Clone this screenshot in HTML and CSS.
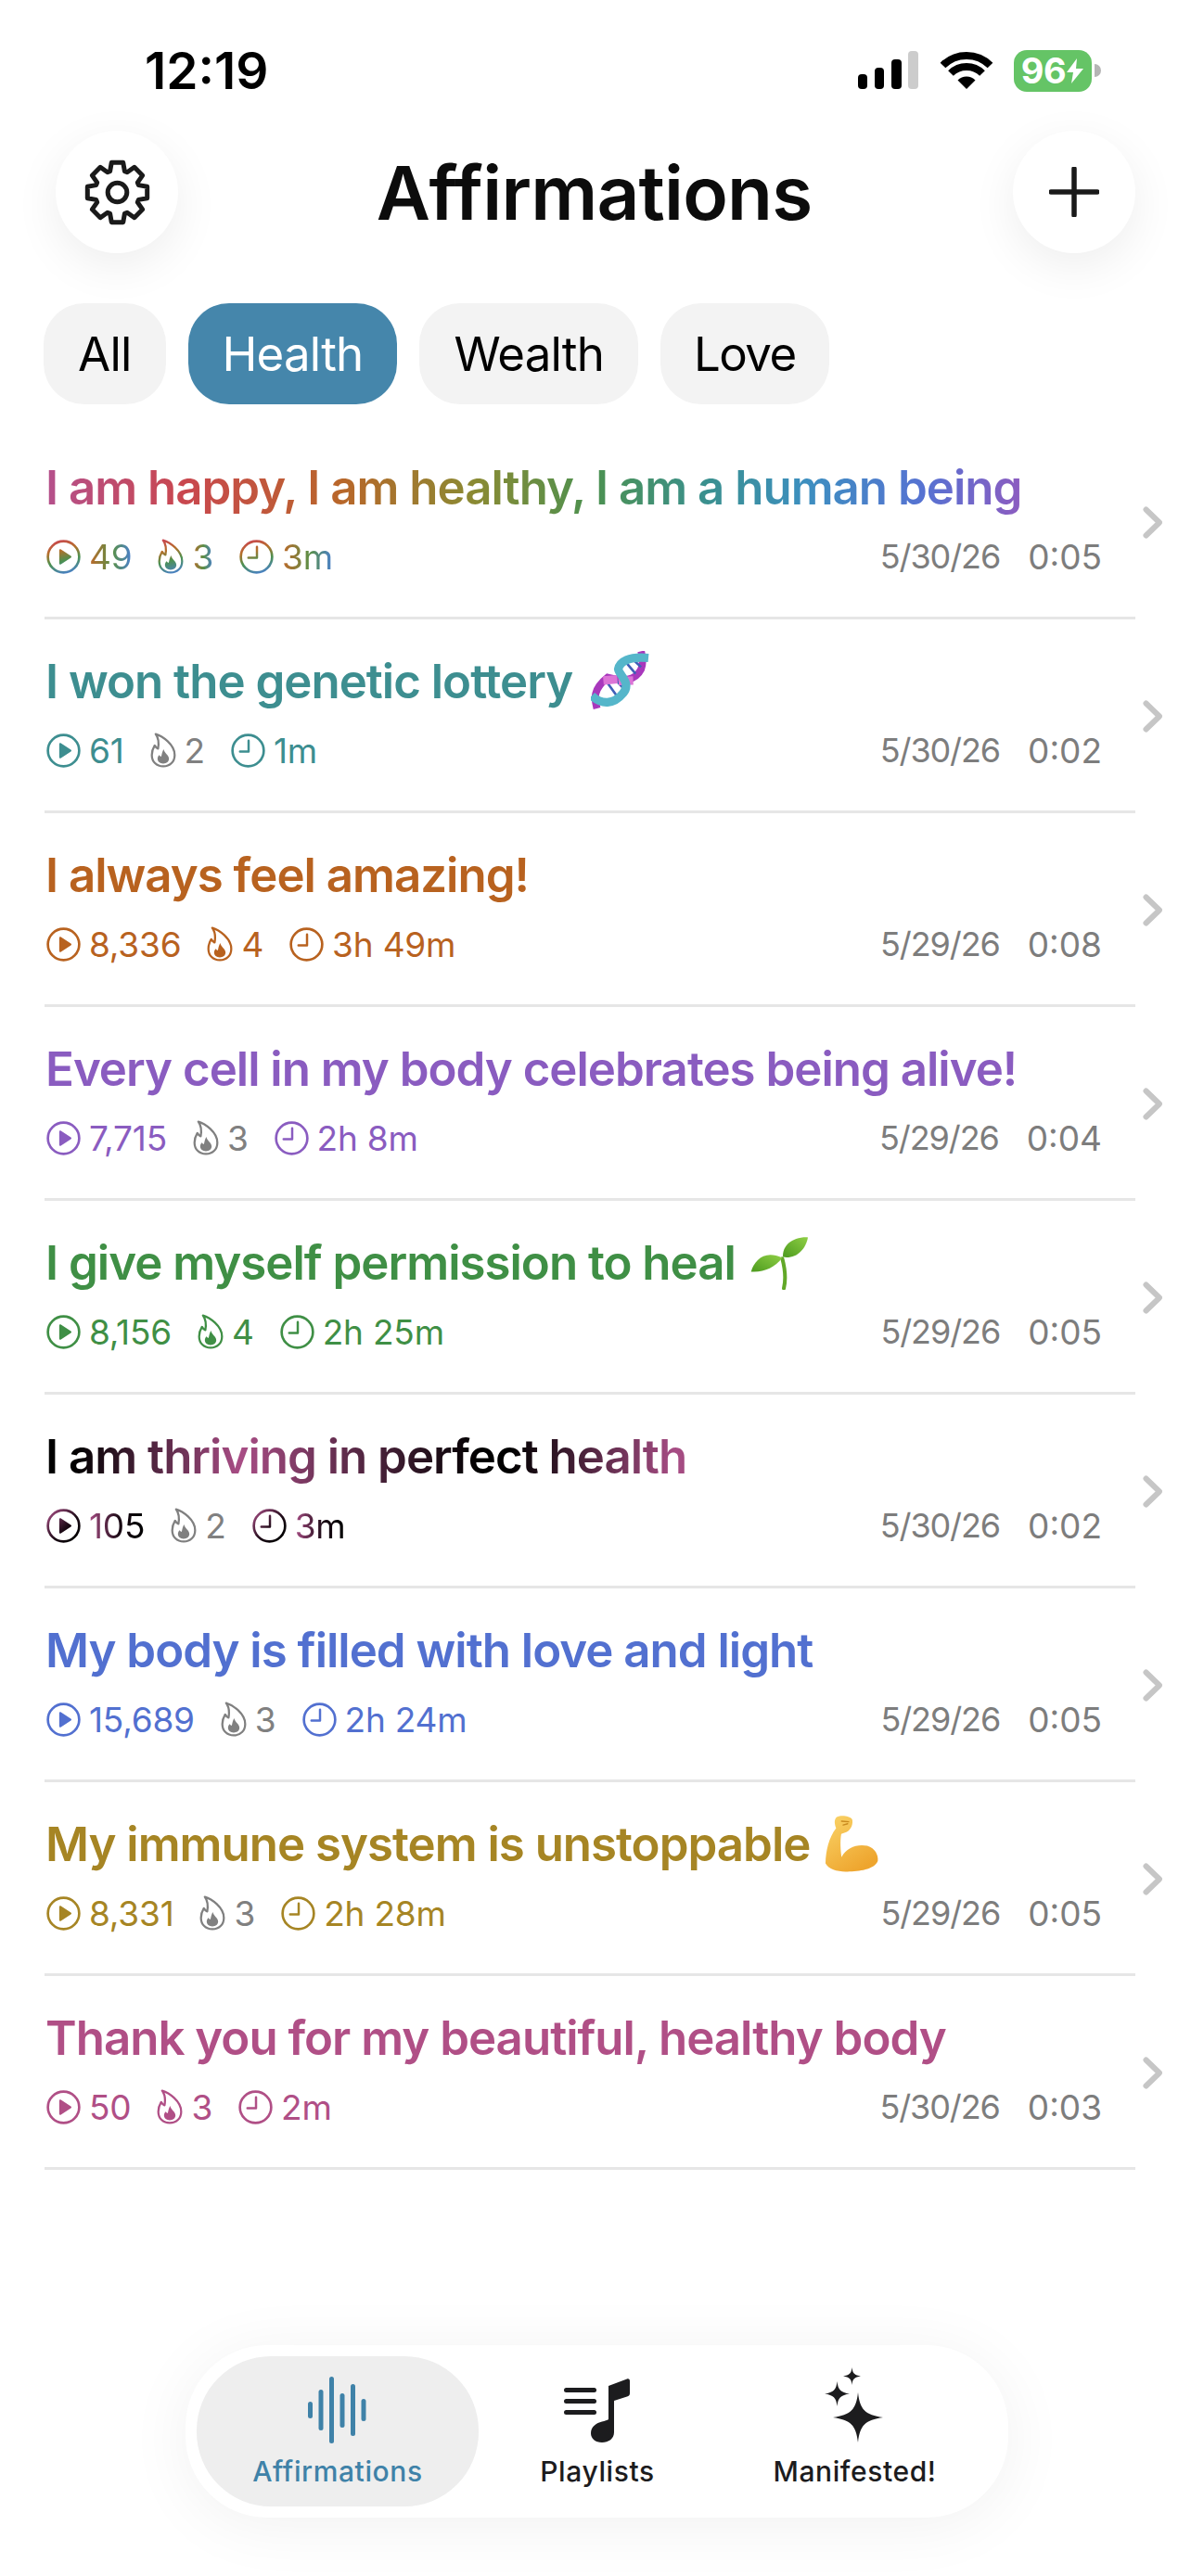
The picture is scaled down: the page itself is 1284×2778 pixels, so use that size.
FILE: index.html
```html
<!DOCTYPE html>
<html lang="en">
<head>
    <meta charset="UTF-8">
    <meta name="viewport" content="width=device-width, initial-scale=1.0">
    <title>Affirmations</title>
    <link rel="stylesheet" href="styles.css">
</head>
<body>
    <!-- shared icons -->
    <svg class="defs" width="0" height="0" aria-hidden="true">
        <defs>
            <linearGradient id="rainbow" gradientUnits="userSpaceOnUse" x1="14" y1="0" x2="24" y2="36">
                <stop offset="0" stop-color="#c9474f"/>
                <stop offset="0.3" stop-color="#b4702a"/>
                <stop offset="0.6" stop-color="#4c9150"/>
                <stop offset="1" stop-color="#4a80d0"/>
            </linearGradient>
            <linearGradient id="plum" gradientUnits="userSpaceOnUse" x1="0" y1="4" x2="30" y2="34">
                <stop offset="0" stop-color="#a84d85"/>
                <stop offset="0.6" stop-color="#1c0a16"/>
                <stop offset="1" stop-color="#000"/>
            </linearGradient>
            <symbol id="play" viewBox="0 0 36 36">
                <circle class="ln" cx="18" cy="18" r="16.4" stroke-width="2.6"/>
                <path class="sol" d="M13.500 11.200v13.600c0 1 1 1.500 1.800 1l10.400-6.800c.8-.5.8-1.500 0-2l-10.400-6.800c-.8-.5-1.800 0-1.800 1z"/>
            </symbol>
            <symbol id="clock" viewBox="0 0 36 36">
                <circle class="ln" cx="18" cy="18" r="16.4" stroke-width="2.6"/>
                <path class="ln" d="M18.500 7.500v11.500h-9" stroke-width="2.4" stroke-linecap="round" stroke-linejoin="round"/>
            </symbol>
            <symbol id="flame" viewBox="0.5 0.5 27 37">
                <path class="ln" d="M6 2C13 4 26 13 26 24C26 31 21 36 14 36C7 36 2 31 2 24C2 20 3.500 16.500 5 14C6 16 7 17 8.500 17.500C9.500 12 9 6 6 2Z" stroke-width="2.2" stroke-linejoin="round"/>
                <path class="sol" d="M14.500 18C15 22 20 24 20 28C20 31 17.500 33 14 33C10.500 33 8 31 8 28C8 26 9 24.500 10 24C10.500 25 11 25.500 12 25.500C12.500 23 13 20 14.500 18Z"/>
            </symbol>
            <symbol id="chev" viewBox="0 0 21 35">
                <path d="M3.500 3.500l14.500 14L3.500 31.500" fill="none" stroke="#c6c6c6" stroke-width="6" stroke-linecap="round" stroke-linejoin="round"/>
            </symbol>
            <symbol id="star" viewBox="-27 -27 54 54">
                <path d="M0-27C2-8 8-3 27 0C8 3 2 8 0 27C-2 8-8 3-27 0C-8-3-2-8 0-27Z" fill="#1c1c1e"/>
            </symbol>
        </defs>
    </svg>

    <div class="app">
        <div class="status">
            <span class="clock-text">12:19</span>
            <div class="status-icons">
                <svg width="66" height="42" viewBox="0 0 66 42">
                    <rect x="0" y="25" width="10" height="16" rx="4"/>
                    <rect x="18" y="18" width="10" height="23" rx="4"/>
                    <rect x="36" y="9" width="11" height="32" rx="4"/>
                    <rect x="54" y="0" width="11" height="41" rx="4" fill="#ccc"/>
                </svg>
                <svg width="58" height="42" viewBox="0 0 57 42">
                    <path d="M28.500 41L19 31.500A13.500 13.500 0 0 1 38 31.500Z"/>
                    <path d="M11.500 24A24 24 0 0 1 45.500 24" fill="none" stroke="#000" stroke-width="8"/>
                    <path d="M3 15.500A36 36 0 0 1 54 15.500" fill="none" stroke="#000" stroke-width="8"/>
                </svg>
                <div class="battery">
                    <div class="battery-body">
                        <span>96</span>
                        <svg width="20" height="27" viewBox="0 0 20 27"><path d="M12 0L1 15h7l-2 12L19 11h-8z" fill="#fff"/></svg>
                    </div>
                    <div class="battery-nub"></div>
                </div>
            </div>
        </div>

        <header class="top">
            <button class="round-btn">
                <svg width="75" height="75" viewBox="0 0 48 48">
                    <g transform="translate(24 24)" fill="none" stroke="#1a1a1a" stroke-width="3.2" stroke-linejoin="round">
                        <polygon points="-4,-20.6 4,-20.6 5.05,-14.65 6.8,-13.93 11.74,-17.41 17.41,-11.74 13.93,-6.8 14.65,-5.05 20.6,-4 20.6,4 14.65,5.05 13.93,6.8 17.41,11.74 11.74,17.41 6.8,13.93 5.05,14.65 4,20.6 -4,20.6 -5.05,14.65 -6.8,13.93 -11.74,17.41 -17.41,11.74 -13.93,6.8 -14.65,5.05 -20.6,4 -20.6,-4 -14.65,-5.05 -13.93,-6.8 -17.41,-11.74 -11.74,-17.41 -6.8,-13.93 -5.05,-14.65"/>
                        <circle r="6.6"/>
                    </g>
                </svg>
            </button>
            <h1>Affirmations</h1>
            <button class="round-btn">
                <svg width="54" height="54" viewBox="0 0 54 54">
                    <path d="M27 2v50M2 27h50" fill="none" stroke="#1a1a1a" stroke-width="5.500" stroke-linecap="round"/>
                </svg>
            </button>
        </header>

        <nav class="chips">
            <span class="chip">All</span>
            <span class="chip chip-on">Health</span>
            <span class="chip">Wealth</span>
            <span class="chip">Love</span>
        </nav>

        <div class="list">
            <div class="row c-rainbow">
                <div class="item">
                    <div class="name"><span class="name-text">I am happy, I am healthy, I am a human being</span></div>
                    <div class="meta">
                        <div class="stat"><svg class="ico ico-round"><use href="#play"/></svg><span class="num">49</span></div>
                        <div class="stat"><svg class="ico ico-flame"><use href="#flame"/></svg><span class="num">3</span></div>
                        <div class="stat"><svg class="ico ico-round"><use href="#clock"/></svg><span class="num">3m</span></div>
                        <div class="when"><span class="date">5/30/26</span><span>0:05</span></div>
                    </div>
                </div>
                <svg class="chev"><use href="#chev"/></svg>
            </div>

            <div class="row c-teal">
                <div class="item">
                    <div class="name">
                        <span class="name-text">I won the genetic lottery</span>
                        <svg class="emoji" width="64" height="64" viewBox="25 25 195 195">
                            <path d="M45 214C36 180 32 150 80 112C130 125 170 125 190 85C198 65 195 45 190 26" fill="none" stroke="#a838bc" stroke-width="24"/>
                            <path d="M78 128L112 175M102 115L132 148M140 62L172 100M160 50L190 78" stroke="#3f5fb8" stroke-width="8"/>
                            <path d="M66 122L112 118M116 124L164 122" stroke="#dc74d6" stroke-width="28"/>
                            <path d="M28 172C60 202 100 202 130 165C160 130 118 105 115 85C120 60 150 42 214 48" fill="none" stroke="#55b6ca" stroke-width="28"/>
                        </svg>
                    </div>
                    <div class="meta">
                        <div class="stat"><svg class="ico ico-round"><use href="#play"/></svg><span class="num">61</span></div>
                        <div class="stat flame-off"><svg class="ico ico-flame"><use href="#flame"/></svg><span class="num">2</span></div>
                        <div class="stat"><svg class="ico ico-round"><use href="#clock"/></svg><span class="num">1m</span></div>
                        <div class="when"><span class="date">5/30/26</span><span>0:02</span></div>
                    </div>
                </div>
                <svg class="chev"><use href="#chev"/></svg>
            </div>

            <div class="row c-orange">
                <div class="item">
                    <div class="name"><span class="name-text">I always feel amazing!</span></div>
                    <div class="meta">
                        <div class="stat"><svg class="ico ico-round"><use href="#play"/></svg><span class="num">8,336</span></div>
                        <div class="stat"><svg class="ico ico-flame"><use href="#flame"/></svg><span class="num">4</span></div>
                        <div class="stat"><svg class="ico ico-round"><use href="#clock"/></svg><span class="num">3h 49m</span></div>
                        <div class="when"><span class="date">5/29/26</span><span>0:08</span></div>
                    </div>
                </div>
                <svg class="chev"><use href="#chev"/></svg>
            </div>

            <div class="row c-purple">
                <div class="item">
                    <div class="name"><span class="name-text">Every cell in my body celebrates being alive!</span></div>
                    <div class="meta">
                        <div class="stat"><svg class="ico ico-round"><use href="#play"/></svg><span class="num">7,715</span></div>
                        <div class="stat flame-off"><svg class="ico ico-flame"><use href="#flame"/></svg><span class="num">3</span></div>
                        <div class="stat"><svg class="ico ico-round"><use href="#clock"/></svg><span class="num">2h 8m</span></div>
                        <div class="when"><span class="date">5/29/26</span><span>0:04</span></div>
                    </div>
                </div>
                <svg class="chev"><use href="#chev"/></svg>
            </div>

            <div class="row c-green">
                <div class="item">
                    <div class="name">
                        <span class="name-text">I give myself permission to heal</span>
                        <svg class="emoji" width="64" height="59" viewBox="20 45 190 175">
                            <defs>
                                <linearGradient id="leaf" x1="0" y1="1" x2="1" y2="0">
                                    <stop offset="0" stop-color="#4c9a1e"/>
                                    <stop offset="1" stop-color="#8fcf45"/>
                                </linearGradient>
                            </defs>
                            <path d="M125 120C133 150 136 190 130 215" fill="none" stroke="#62a828" stroke-width="12" stroke-linecap="round"/>
                            <path d="M25 162C35 125 70 90 125 118C100 150 65 165 25 162Z" fill="url(#leaf)"/>
                            <path d="M127 115C125 80 155 50 207 52C200 90 170 122 127 115Z" fill="url(#leaf)"/>
                        </svg>
                    </div>
                    <div class="meta">
                        <div class="stat"><svg class="ico ico-round"><use href="#play"/></svg><span class="num">8,156</span></div>
                        <div class="stat"><svg class="ico ico-flame"><use href="#flame"/></svg><span class="num">4</span></div>
                        <div class="stat"><svg class="ico ico-round"><use href="#clock"/></svg><span class="num">2h 25m</span></div>
                        <div class="when"><span class="date">5/29/26</span><span>0:05</span></div>
                    </div>
                </div>
                <svg class="chev"><use href="#chev"/></svg>
            </div>

            <div class="row c-plum">
                <div class="item">
                    <div class="name"><span class="name-text">I am thriving in perfect health</span></div>
                    <div class="meta">
                        <div class="stat"><svg class="ico ico-round"><use href="#play"/></svg><span class="num">105</span></div>
                        <div class="stat flame-off"><svg class="ico ico-flame"><use href="#flame"/></svg><span class="num">2</span></div>
                        <div class="stat"><svg class="ico ico-round"><use href="#clock"/></svg><span class="num">3m</span></div>
                        <div class="when"><span class="date">5/30/26</span><span>0:02</span></div>
                    </div>
                </div>
                <svg class="chev"><use href="#chev"/></svg>
            </div>

            <div class="row c-blue">
                <div class="item">
                    <div class="name"><span class="name-text">My body is filled with love and light</span></div>
                    <div class="meta">
                        <div class="stat"><svg class="ico ico-round"><use href="#play"/></svg><span class="num">15,689</span></div>
                        <div class="stat flame-off"><svg class="ico ico-flame"><use href="#flame"/></svg><span class="num">3</span></div>
                        <div class="stat"><svg class="ico ico-round"><use href="#clock"/></svg><span class="num">2h 24m</span></div>
                        <div class="when"><span class="date">5/29/26</span><span>0:05</span></div>
                    </div>
                </div>
                <svg class="chev"><use href="#chev"/></svg>
            </div>

            <div class="row c-gold">
                <div class="item">
                    <div class="name">
                        <span class="name-text">My immune system is unstoppable</span>
                        <svg class="emoji" width="60" height="64" viewBox="30 25 172 185">
                            <defs>
                                <linearGradient id="skin" x1="0" y1="0" x2="0.6" y2="1">
                                    <stop offset="0" stop-color="#fad468"/>
                                    <stop offset="1" stop-color="#eea52e"/>
                                </linearGradient>
                            </defs>
                            <path d="M70 35C85 28 110 32 118 42C122 55 115 75 100 82L84 88C80 110 82 140 85 160C100 130 135 118 165 125C190 132 200 155 198 172C190 195 150 205 110 205C80 208 45 200 35 180C36 140 45 100 68 70C62 55 62 42 70 35Z" fill="url(#skin)"/>
                            <path d="M85 48l22 2M90 60l14-4" fill="none" stroke="#c98a1e" stroke-width="4" stroke-linecap="round"/>
                        </svg>
                    </div>
                    <div class="meta">
                        <div class="stat"><svg class="ico ico-round"><use href="#play"/></svg><span class="num">8,331</span></div>
                        <div class="stat flame-off"><svg class="ico ico-flame"><use href="#flame"/></svg><span class="num">3</span></div>
                        <div class="stat"><svg class="ico ico-round"><use href="#clock"/></svg><span class="num">2h 28m</span></div>
                        <div class="when"><span class="date">5/29/26</span><span>0:05</span></div>
                    </div>
                </div>
                <svg class="chev"><use href="#chev"/></svg>
            </div>

            <div class="row c-pink">
                <div class="item">
                    <div class="name"><span class="name-text">Thank you for my beautiful, healthy body</span></div>
                    <div class="meta">
                        <div class="stat"><svg class="ico ico-round"><use href="#play"/></svg><span class="num">50</span></div>
                        <div class="stat"><svg class="ico ico-flame"><use href="#flame"/></svg><span class="num">3</span></div>
                        <div class="stat"><svg class="ico ico-round"><use href="#clock"/></svg><span class="num">2m</span></div>
                        <div class="when"><span class="date">5/30/26</span><span>0:03</span></div>
                    </div>
                </div>
                <svg class="chev"><use href="#chev"/></svg>
            </div>
        </div>

        <div class="tabs-wrap">
            <nav class="tabs">
                <div class="tab tab-on">
                    <svg width="68" height="72" viewBox="0 0 68 72" fill="#3f82a8">
                        <rect x="2" y="27" width="5" height="18" rx="2.5"/>
                        <rect x="13.5" y="14" width="5" height="44" rx="2.5"/>
                        <rect x="25" y="0" width="5" height="72" rx="2.5"/>
                        <rect x="36.5" y="18" width="5" height="37" rx="2.5"/>
                        <rect x="48" y="8" width="5" height="56" rx="2.5"/>
                        <rect x="59.5" y="24" width="5" height="24" rx="2.5"/>
                    </svg>
                    <span>Affirmations</span>
                </div>
                <div class="tab">
                    <svg width="72" height="72" viewBox="0 0 72 72" fill="#1c1c1e">
                        <rect x="0" y="12" width="35" height="5" rx="2.5"/>
                        <rect x="0" y="24" width="35" height="5" rx="2.5"/>
                        <rect x="0" y="36" width="35" height="5" rx="2.5"/>
                        <path d="M48 10L68 2.500C70 2 71 3 71 5V18C71 20 70 21 68 21.500L54 26V60C54 67 48 71 41 71C34 71 29 67 29 61C29 54 35 50 41 48.500C44 47.800 47 47 48 46Z"/>
                    </svg>
                    <span>Playlists</span>
                </div>
                <div class="tab">
                    <svg width="66" height="82" viewBox="0 0 66 82">
                        <use href="#star" x="9" y="27" width="54" height="54"/>
                        <use href="#star" x="0" y="15" width="27" height="27"/>
                        <use href="#star" x="20" y="0" width="19" height="19"/>
                    </svg>
                    <span>Manifested!</span>
                </div>
            </nav>
        </div>
    </div>
</body>
</html>
```

FILE: styles.css
```css
* {
    box-sizing: border-box;
}
body {
    margin: 0;
    background-color: #ffffff;
    color: #000000;
    font-family: Inter, "Noto Sans", sans-serif;
}
.defs {
    position: absolute;
}
.app {
    min-height: 2778px;
    display: flex;
    flex-direction: column;
}

/* status bar */
.status {
    display: flex;
    justify-content: space-between;
    align-items: center;
    height: 46px;
    margin-top: 53px;
    padding: 0 97px 0 156px;
}
.clock-text {
    font-size: 55px;
    font-weight: 600;
}
.status-icons {
    display: flex;
    align-items: center;
    gap: 22px;
}
.battery {
    display: flex;
    align-items: center;
    gap: 3px;
}
.battery-body {
    width: 84px;
    height: 45px;
    border-radius: 14px;
    background-color: #65c466;
    color: #ffffff;
    font-size: 38px;
    font-weight: 700;
    letter-spacing: -0.5px;
    display: flex;
    align-items: center;
    justify-content: center;
}
.battery-nub {
    width: 7px;
    height: 14px;
    border-radius: 0 7px 7px 0;
    background-color: #b5b5b5;
}

/* header */
.top {
    display: flex;
    align-items: center;
    justify-content: space-between;
    margin-top: 42px;
    padding: 0 60px;
}
.top h1 {
    margin: 0 3px 0 0;
    font-size: 80px;
    font-weight: 600;
    letter-spacing: -0.8px;
    color: #0c0c0c;
}
.round-btn {
    width: 132px;
    height: 132px;
    border: none;
    border-radius: 50%;
    padding: 0;
    background-color: #ffffff;
    box-shadow: 0 14px 50px rgba(0, 0, 0, 0.07);
    display: flex;
    align-items: center;
    justify-content: center;
}

/* filters */
.chips {
    display: flex;
    gap: 24px;
    margin-top: 54px;
    padding-left: 47px;
}
.chip {
    height: 109px;
    padding: 0 37px;
    border-radius: 44px;
    background-color: #f3f3f3;
    font-size: 51px;
    letter-spacing: -0.8px;
    display: flex;
    align-items: center;
}
.chip:last-child {
    padding: 0 36px;
    letter-spacing: -1.6px;
}
.chip-on {
    background-color: #4586ab;
    color: #ffffff;
}

/* list */
.list {
    margin-top: 23px;
    padding-left: 48px;
}
.row {
    display: flex;
    align-items: center;
    gap: 8px;
}
.item {
    width: 1176px;
    height: 209px;
    padding-top: 31px;
    border-bottom: 3px solid #e6e6e6;
}
.name {
    height: 70px;
    padding-left: 1px;
    display: flex;
    align-items: center;
    gap: 15px;
    font-size: 51px;
    font-weight: 600;
    letter-spacing: -1px;
    white-space: nowrap;
}
.emoji {
    flex-shrink: 0;
}
.c-teal .emoji {
    margin-left: 5px;
}
.meta {
    height: 40px;
    margin-top: 20px;
    padding: 0 36px 0 2px;
    display: flex;
    align-items: center;
    gap: 28px;
    font-size: 37px;
}
.stat {
    display: flex;
    align-items: center;
    gap: 9px;
}
.num {
    letter-spacing: -0.2px;
}
.flame-off {
    color: #808080;
    --ico: #808080;
}
.ico {
    display: block;
}
.ico-round {
    width: 37px;
    height: 37px;
}
.ico-flame {
    width: 28px;
    height: 38px;
}
.ln {
    fill: none;
    stroke: var(--ico, currentColor);
}
.sol {
    fill: var(--ico, currentColor);
}
.when {
    margin-left: auto;
    display: flex;
    gap: 30px;
    color: #7d7d7d;
}
.date {
    font-size: 36px;
    letter-spacing: -1.1px;
}
.chev {
    width: 21px;
    height: 35px;
    flex-shrink: 0;
}

/* colours per affirmation */
.c-teal { color: #3d8e90; }
.c-orange { color: #b8621f; }
.c-purple { color: #8a5cc0; }
.c-green { color: #3f8f45; }
.c-blue { color: #5270d0; }
.c-gold { color: #a68524; }
.c-pink { color: #b04f86; }
.c-rainbow .name-text,
.c-rainbow .stat .num,
.c-plum .name-text,
.c-plum .stat:not(.flame-off) .num {
    -webkit-background-clip: text;
    background-clip: text;
    color: transparent;
}
.c-rainbow .name-text {
    background-image: linear-gradient(90deg, #b4508c 0%, #c9474f 14%, #b9662a 30%, #8a8a33 44%, #4c9150 56%, #3a9090 68%, #3d8fc0 78%, #5672d2 90%, #8c5cc0 100%);
}
.c-rainbow .num {
    background-image: linear-gradient(90deg, #c0692a 0%, #5a9048 55%, #4a80d0 100%);
}
.c-rainbow .ico {
    --ico: url(#rainbow);
}
.c-plum {
    color: #000000;
}
.c-plum .name-text {
    background-image: repeating-linear-gradient(90deg, #000000 0, #000000 30px, #a84d85 210px, #000000 470px);
}
.c-plum .stat:not(.flame-off) .num {
    background-image: linear-gradient(90deg, #a84d85 0%, #1a0a14 55%, #000000 100%);
}
.c-plum .ico {
    --ico: url(#plum);
}
.c-plum .flame-off {
    color: #808080;
}
.c-plum .flame-off .ico {
    --ico: #808080;
}

/* bottom tabs */
.tabs-wrap {
    margin-top: auto;
    padding-bottom: 63px;
    display: flex;
    justify-content: center;
}
.tabs {
    width: 887px;
    height: 186px;
    margin-left: 3px;
    padding: 12px;
    border-radius: 88px;
    background-color: #ffffff;
    box-shadow: 0 8px 70px rgba(0, 0, 0, 0.06);
    display: grid;
    grid-template-columns: 304px 256px 299px;
}
.tab {
    border-radius: 80px;
    display: flex;
    flex-direction: column;
    align-items: center;
    justify-content: flex-end;
    gap: 12px;
    padding-bottom: 20px;
    font-size: 30px;
    font-weight: 500;
    letter-spacing: 0.6px;
    color: #1c1c1e;
}
.tab-on {
    background-color: #eeeeee;
    color: #3f82a8;
}
```
